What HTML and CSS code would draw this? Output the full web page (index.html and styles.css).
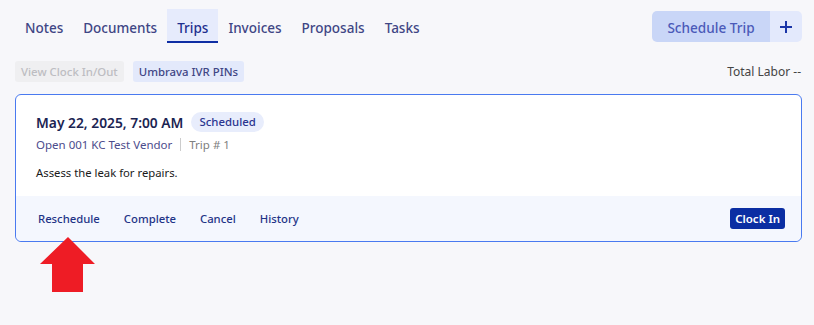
FILE: index.html
```html
<!DOCTYPE html>
<html lang="en">
<head>
  <meta charset="UTF-8">
  <title>Trips</title>
  <link rel="stylesheet" href="styles.css">
</head>
<body>

  <div class="topbar">
    <nav class="tabs">
      <a class="tab">Notes</a>
      <a class="tab">Documents</a>
      <a class="tab active">Trips</a>
      <a class="tab">Invoices</a>
      <a class="tab">Proposals</a>
      <a class="tab">Tasks</a>
    </nav>
    <div class="split-btn">
      <button class="main">Schedule Trip</button>
      <button class="plus">
        <svg width="14" height="14" viewBox="0 0 14 14"><path d="M7 1v12M1 7h12" stroke="#1a35a8" stroke-width="2"/></svg>
      </button>
    </div>
  </div>

  <div class="toolbar">
    <div class="chips">
      <span class="chip disabled">View Clock In/Out</span>
      <span class="chip">Umbrava IVR PINs</span>
    </div>
    <span class="labor">Total Labor --</span>
  </div>

  <div class="trip">
    <div class="trip-body">
      <div class="trip-head">
        <h3>May 22, 2025, 7:00 AM</h3>
        <span class="badge">Scheduled</span>
      </div>
      <p class="meta"><span class="vendor">Open 001 KC Test Vendor</span><span class="sep"></span><span class="num">Trip # 1</span></p>
      <p class="desc">Assess the leak for repairs.</p>
    </div>
    <div class="trip-foot">
      <div class="links">
        <a>Reschedule</a>
        <a>Complete</a>
        <a>Cancel</a>
        <a>History</a>
      </div>
      <button class="clock">Clock In</button>
    </div>
  </div>

  <div class="pointer">
    <svg width="58" height="57" viewBox="0 0 58 57">
      <path d="M29 1 L56 28 L44 28 L44 56 L13 56 L13 28 L1 28 Z" fill="#ee1c25"/>
    </svg>
  </div>

</body>
</html>
```
FILE: styles.css
```css
body {
  margin: 0;
  padding: 9px 12px 0 15px;
  min-height: 316px;
  background-color: #f7f7fa;
  font-family: "Noto Sans", "Open Sans", sans-serif;
  color: #222;
}

.topbar {
  display: flex;
  justify-content: space-between;
  align-items: flex-start;
}

.tabs {
  display: flex;
}

.tab {
  padding: 9px 10px 3px;
  font-size: 13.5px;
  font-weight: 500;
  color: #3f4685;
  border-bottom: 2px solid transparent;
  line-height: 20px;
}

.tab.active {
  background: #e6ebfc;
  color: #1e2f8f;
  border-bottom-color: #0f2ea3;
}

.split-btn {
  display: flex;
  margin-top: 2px;
  border-radius: 5px;
  overflow: hidden;
}

.split-btn button {
  border: none;
  height: 31px;
  font-family: inherit;
  cursor: pointer;
}

.split-btn .main {
  width: 118px;
  background: #c9d6f7;
  color: #4b5ab9;
  font-size: 13.6px;
  font-weight: 500;
  padding-top: 2px;
}

.split-btn .plus {
  width: 32px;
  background: #e3e9fc;
  display: flex;
  align-items: center;
  justify-content: center;
}

.toolbar {
  display: flex;
  justify-content: space-between;
  align-items: center;
  margin-top: 18px;
  padding-right: 1px;
}

.chips {
  display: flex;
  gap: 9px;
}

.chip {
  font-size: 11.4px;
  font-weight: 500;
  padding: 2px 6px;
  line-height: 17px;
  border-radius: 3px;
  background: #e3e9fb;
  color: #3f4685;
}

.chip.disabled {
  background: #efeff1;
  color: #bdbdc2;
}

.labor {
  font-size: 12px;
  color: #444;
}

.trip {
  margin-top: 12px;
  border: 1px solid #4a7af0;
  border-radius: 6px;
  background: #fff;
}

.trip-body {
  padding: 17px 20px 16px;
}

.trip-head {
  display: flex;
  align-items: center;
  gap: 8px;
}

.trip-head h3 {
  margin: 0;
  font-size: 13.8px;
  font-weight: 600;
  color: #1b2452;
}

.badge {
  font-size: 11.4px;
  font-weight: 500;
  color: #2b3590;
  background: #e8edfc;
  padding: 1px 8px;
  border-radius: 10px;
  line-height: 18px;
}

.meta {
  margin: 5px 0 0;
  font-size: 11.5px;
  display: flex;
  align-items: center;
}

.vendor {
  color: #4c4c8c;
}

.sep {
  width: 1px;
  height: 13px;
  background: #ccc;
  margin: 0 8px;
}

.num {
  color: #808080;
}

.desc {
  margin: 13px 0 0;
  font-size: 11.3px;
  color: #1a1a1a;
}

.trip-foot {
  display: flex;
  justify-content: space-between;
  align-items: center;
  background: #f4f7fe;
  padding: 12px 16px 12px 22px;
  border-radius: 0 0 6px 6px;
}

.links {
  display: flex;
  gap: 24px;
}

.links a {
  font-size: 11.3px;
  font-weight: 500;
  color: #1f3487;
}

.clock {
  border: none;
  background: #0b2ea3;
  color: #fff;
  font-family: inherit;
  font-size: 11.5px;
  font-weight: 600;
  padding: 3px 5px;
  border-radius: 3px;
}

.pointer {
  position: relative;
  z-index: 1;
  margin: -6px 0 0 24px;
  height: 57px;
}
```
